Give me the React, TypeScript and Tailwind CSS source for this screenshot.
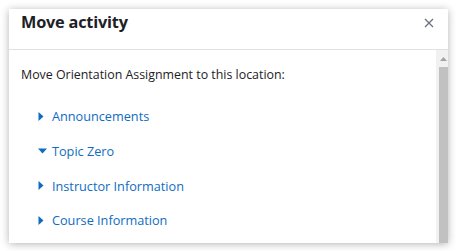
import React from "react";

const items = [
  { label: "Announcements", open: false },
  { label: "Topic Zero", open: true },
  { label: "Instructor Information", open: false },
  { label: "Course Information", open: false },
];

function Caret({ open }: { open: boolean }) {
  return open ? (
    <svg width="9" height="6" viewBox="0 0 9 6" className="block">
      <polygon points="0,0.5 9,0.5 4.5,5.5" fill="#0f6cbf" />
    </svg>
  ) : (
    <svg width="6" height="9" viewBox="0 0 6 9" className="block">
      <polygon points="0.5,0 5.5,4.5 0.5,9" fill="#0f6cbf" />
    </svg>
  );
}

export default function App() {
  return (
    <div
      className="w-[456px] h-[251px] bg-white pt-[9px] pl-[9px] overflow-hidden"
      style={{ fontFamily: '"Open Sans", "Noto Sans", sans-serif' }}
    >
      <div className="w-[439px] h-[234px] bg-white flex flex-col shadow-[0_1px_8px_rgba(0,0,0,0.3)]">
        <div className="h-[41px] shrink-0 flex items-center justify-between pl-[12px] pr-[14px] pb-[13px] border-b border-[#dee2e6]">
          <span className="text-[16.3px] font-bold text-[#1d2125] leading-none tracking-[-0.2px]">
            Move activity
          </span>
          <svg width="10" height="10" viewBox="0 0 10 10" className="block">
            <path d="M1 1 L9 9 M9 1 L1 9" stroke="#6a737b" strokeWidth="1.3" />
          </svg>
        </div>
        <div className="flex-1 flex min-h-0">
          <div className="flex-1 pl-[12px] pt-[15px]">
            <div className="text-[12.4px] leading-[20px] text-[#1d2125]">
              Move Orientation Assignment to this location:
            </div>
            <div className="mt-[14px] flex flex-col">
              {items.map((it) => (
                <div key={it.label} className="h-[34.7px] flex items-center pl-[17px]">
                  <div className="w-[14px] flex items-center">
                    <Caret open={it.open} />
                  </div>
                  <span className="text-[12.7px] text-[#0f6cbf] leading-[20px]">{it.label}</span>
                </div>
              ))}
            </div>
          </div>
          <div className="w-[12px] bg-[#f1f1f1] flex flex-col items-end">
            <div className="w-[9px] h-[17px] flex items-center justify-center">
              <svg width="7" height="4" viewBox="0 0 7 4" className="block">
                <polygon points="0,4 7,4 3.5,0" fill="#a3a3a3" />
              </svg>
            </div>
            <div className="w-[9px] flex-1 bg-[#c1c1c1]" />
          </div>
        </div>
      </div>
    </div>
  );
}
